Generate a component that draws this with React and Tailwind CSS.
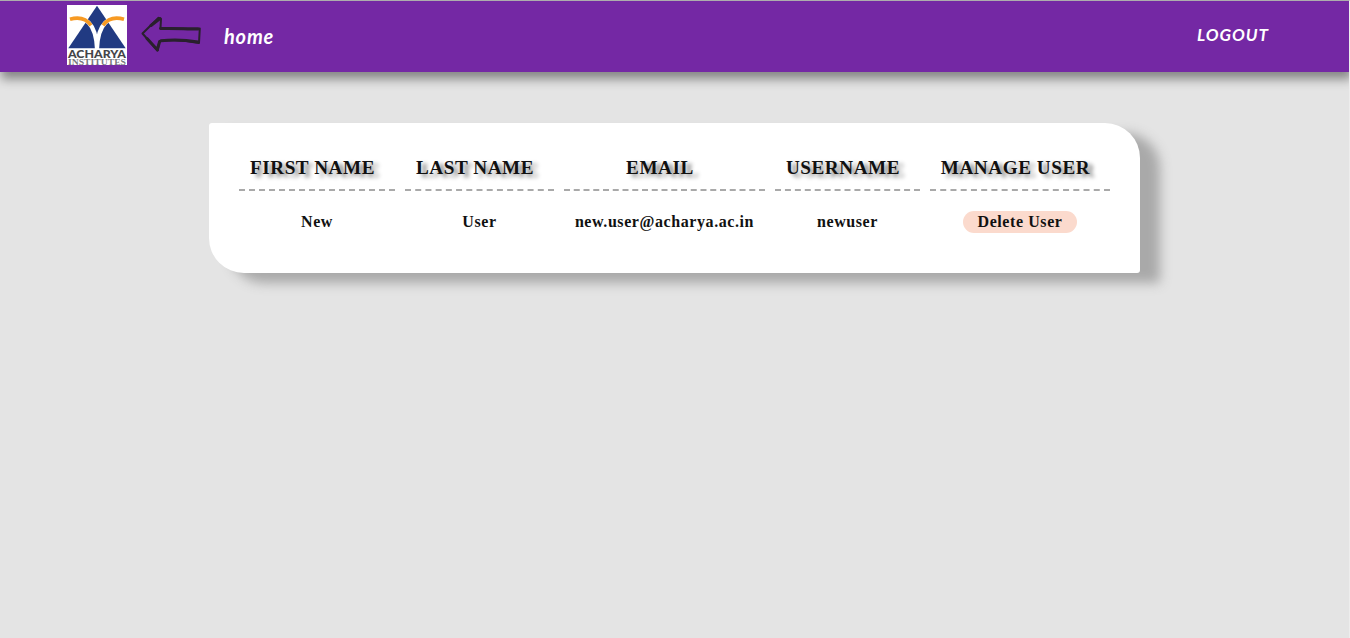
const columns = [
  { title: "FIRST NAME", value: "New" },
  { title: "LAST NAME", value: "User" },
  { title: "EMAIL", value: "new.user@acharya.ac.in" },
  { title: "USERNAME", value: "newuser" },
];

function Heading({ children }) {
  return (
    <div className="h-[38px] border-b-2 border-dashed border-[#a9a9a9] pr-[9px] pt-[1px] text-center text-[19.2px] leading-[28px] whitespace-nowrap tracking-[0.55px] [text-shadow:5px_3px_4px_#808080]">
      {children}
    </div>
  );
}

function Logo() {
  return (
    <svg className="h-[60px] w-[60px] shrink-0 overflow-visible" viewBox="0 0 60 60" role="img" aria-label="Acharya Institutes">
      <rect width="60" height="60" fill="#fff" />
      <path d="M30 .7 58.700 43.300H1.300Z" fill="#213a82" />
      <g fill="none" stroke="#fff" strokeWidth="4.200">
        <path d="M3 14.300C18 10 29 18 30 44" />
        <path d="M57 14.300C42 10 31 18 30 44" />
      </g>
      <g fill="none" stroke="#f79a23" strokeWidth="3.600" strokeDasharray="23.500 100">
        <path d="M3 14.300C18 10 29 18 30 44" />
        <path d="M57 14.300C42 10 31 18 30 44" />
      </g>
      <text x="1" y="52.500" textLength="58" lengthAdjust="spacingAndGlyphs" fill="#444448" fontFamily="Lato, sans-serif" fontWeight="900" fontSize="10.300">ACHARYA</text>
      <text x="1" y="59.500" textLength="58" lengthAdjust="spacingAndGlyphs" fill="#77777b" fontFamily="Liberation Serif, serif" fontWeight="bold" fontSize="8">INSTITUTES</text>
    </svg>
  );
}

function BackArrow() {
  return (
    <svg className="h-[36px] w-[60px]" viewBox="0 0 60 36" fill="none" stroke="#29202d" strokeLinejoin="round" strokeLinecap="round">
      <path d="M17.500 1.800 1.500 17.500 16.500 34.500 18.500 25C30 23.500 44 24 58 27L58.800 12.500C45 12.500 33 12.500 19.500 12L20 3Z" strokeWidth="2" />
      <path d="M19 2.500 10 9.500M6 22.500 16.500 34M16.500 33 18.500 26M19.500 12.500C34 12 44 13 57 13M20 24.800C32 23.500 45 24 57 26" strokeWidth="3" />
    </svg>
  );
}

export default function App() {
  return (
    <div className="min-h-screen border-r border-t border-r-[#ededed] border-t-[#adadad] bg-[#e4e4e4]">
      <header className="flex h-[71px] items-start bg-[#7428a4] pl-[67px] pt-1 text-white shadow-[2px_6px_10px_1px_#858585] [clip-path:inset(0_0_-24px_0)]">
        <Logo />
        <a href="#home" className="ml-[14px] mt-[11px] flex" aria-label="Back">
          <BackArrow />
        </a>
        <a href="#home" className="ml-[23px] mt-[18px] font-['Lato',sans-serif] text-[20px] leading-[26px] font-bold italic tracking-[0.8px]">home</a>
        <a href="#logout" className="mr-[80px] ml-auto mt-[18px] font-['Lato',sans-serif] text-[17px] leading-[24px] font-bold italic tracking-[1px]">LOGOUT</a>
      </header>
      <main className="mt-[51px] ml-[209px] h-[150px] w-[931px] rounded-[3px_35px_3px_35px] bg-white px-[30px] pt-[30px] font-['Liberation_Serif',serif] font-bold text-[#111] shadow-[20px_10px_12px_0px_#a9a9a9]">
        <div className="grid grid-cols-[156px_149px_201px_145px_180px] gap-x-[10px]">
          {columns.map(({ title, value }) => (
            <div key={title}>
              <Heading>{title}</Heading>
              <div className="mt-[20px] text-center text-[16px] leading-[22px] tracking-[0.58px]">{value}</div>
            </div>
          ))}
          <div>
            <Heading>MANAGE USER</Heading>
            <button className="mx-auto mt-[20px] block h-[22px] w-[114px] rounded-full bg-[#fbdacd] text-[16px] leading-[22px] tracking-[0.58px]">Delete User</button>
          </div>
        </div>
      </main>
    </div>
  );
}
